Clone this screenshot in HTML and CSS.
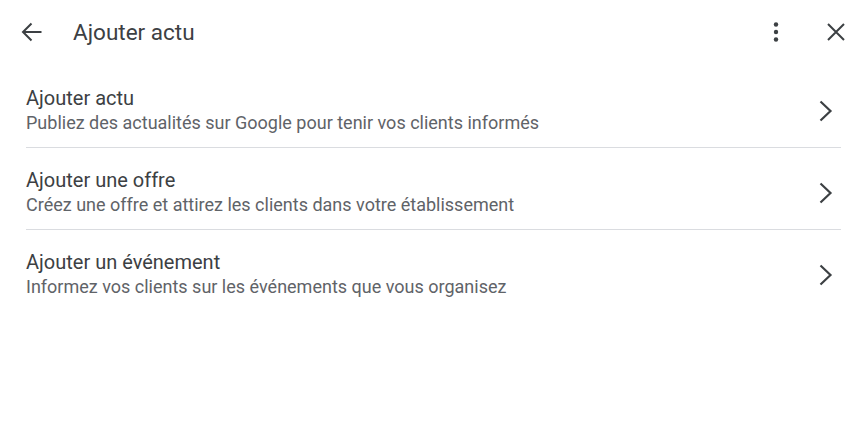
FILE: index.html
```html
<!DOCTYPE html>
<html lang="fr">
<head>
<meta charset="utf-8">
<title>Ajouter actu</title>
<link rel="stylesheet" href="styles.css">
</head>
<body>
<div class="dialog">
  <header class="topbar">
    <button class="icon-btn back" aria-label="Retour">
      <svg width="24" height="24" viewBox="0 0 24 24"><path d="M21.5 12H3M11.5 3.5L3 12l8.5 8.5" fill="none" stroke="#3c4043" stroke-width="2"/></svg>
    </button>
    <h1 class="title">Ajouter actu</h1>
    <button class="icon-btn more" aria-label="Plus d'options">
      <svg width="24" height="24" viewBox="0 0 24 24"><circle cx="12" cy="4.5" r="2.2" fill="#3c4043"/><circle cx="12" cy="12" r="2.2" fill="#3c4043"/><circle cx="12" cy="19.5" r="2.2" fill="#3c4043"/></svg>
    </button>
    <button class="icon-btn close" aria-label="Fermer">
      <svg width="24" height="24" viewBox="0 0 24 24"><path d="M4 4l16 16M20 4L4 20" fill="none" stroke="#3c4043" stroke-width="2"/></svg>
    </button>
  </header>
  <ul class="list">
    <li class="item">
      <div class="text">
        <div class="item-title">Ajouter actu</div>
        <div class="item-sub">Publiez des actualités sur Google pour tenir vos clients informés</div>
      </div>
      <svg class="chev" width="24" height="24" viewBox="0 0 24 24"><path d="M6.5 2.5L16.5 12l-10 9.5" fill="none" stroke="#3c4043" stroke-width="2.2"/></svg>
    </li>
    <li class="item">
      <div class="text">
        <div class="item-title">Ajouter une offre</div>
        <div class="item-sub">Créez une offre et attirez les clients dans votre établissement</div>
      </div>
      <svg class="chev" width="24" height="24" viewBox="0 0 24 24"><path d="M6.5 2.5L16.5 12l-10 9.5" fill="none" stroke="#3c4043" stroke-width="2.2"/></svg>
    </li>
    <li class="item last">
      <div class="text">
        <div class="item-title">Ajouter un événement</div>
        <div class="item-sub">Informez vos clients sur les événements que vous organisez</div>
      </div>
      <svg class="chev" width="24" height="24" viewBox="0 0 24 24"><path d="M6.5 2.5L16.5 12l-10 9.5" fill="none" stroke="#3c4043" stroke-width="2.2"/></svg>
    </li>
  </ul>
</div>
</body>
</html>
```

FILE: styles.css
```css
* { box-sizing: border-box; }
html, body {
  margin: 0;
  padding: 0;
  background: #ffffff;
}
body {
  font-family: Roboto, "Noto Sans", "Liberation Sans", sans-serif;
  color: #3c4043;
}
.dialog {
  width: 865px;
  height: 442px;
  background: #fff;
}
.topbar {
  height: 64px;
  display: flex;
  align-items: center;
  padding: 0 17px 0 20px;
}
.icon-btn {
  border: 0;
  background: none;
  padding: 0;
  width: 24px;
  height: 24px;
  display: flex;
  align-items: center;
  justify-content: center;
}
.back { margin-right: 29px; }
.title {
  flex: 1;
  margin: 0;
  font-size: 22.5px;
  font-weight: 400;
  color: #3c4043;
  line-height: 28px;
}
.more { margin-right: 36px; }
.list {
  list-style: none;
  margin: 0 24px 0 26px;
  padding: 2px 0 0;
}
.item {
  display: flex;
  align-items: center;
  padding: 20px 0 12px;
  border-bottom: 1px solid #dadce0;
}
.item.last { border-bottom: 0; }
.text { flex: 1; }
.item-title {
  font-size: 20px;
  line-height: 24px;
  color: #3c4043;
}
.item-sub {
  margin-top: 1px;
  font-size: 18px;
  line-height: 24px;
  color: #5f6368;
}
.chev { margin-right: 3px; }
```
